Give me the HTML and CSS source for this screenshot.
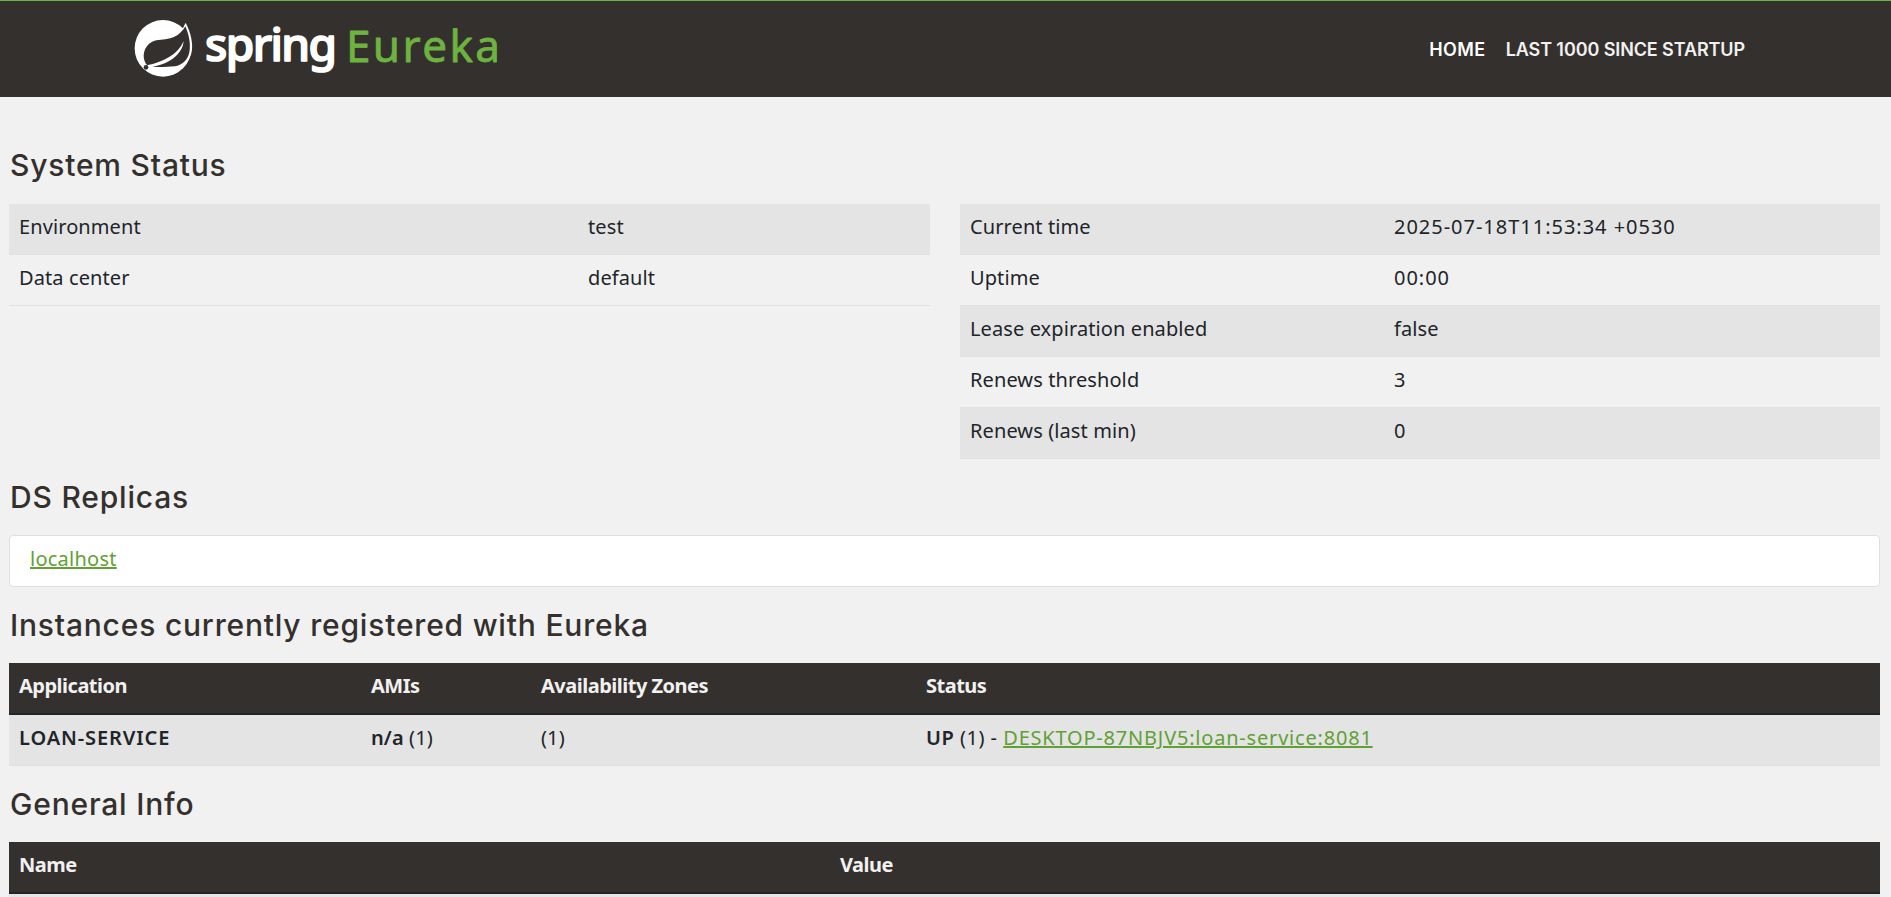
FILE: index.html
```html
<!DOCTYPE html>
<html lang="en">
<head>
<meta charset="utf-8">
<title>Eureka</title>
<link rel="stylesheet" href="styles.css">
</head>
<body>
<nav class="navbar">
  <a class="brand" href="#" aria-label="Spring Eureka">
    <svg class="logo" viewBox="0 0 370 70" width="370" height="70">
      <g transform="scale(.3333)">
        <circle cx="99" cy="103" r="85" fill="#fff"/>
        <path class="vein" d="M167 26C182 55 191 90 184 118C178 142 160 157 140 161L130 100Z"/>
        <path class="leaf" d="M166 37C177 62 183 92 178 115C173 140 155 154 135 157C110 160 80 159 58 159L48 150C34 128 42 98 64 85C88 70 138 88 166 37Z"/>
        <path class="vein" d="M161 82C157 120 120 152 56 161L50 154C100 145 143 122 161 82Z"/>
        <circle class="dot" cx="48" cy="160" r="7"/>
      </g>
      <text class="word-spring" x="75" y="47" textLength="132">spring</text>
      <text class="word-eureka" x="216" y="48" textLength="154">Eureka</text>
    </svg>
  </a>
  <div class="links"><a class="active" href="#">HOME</a><a class="last" href="#">LAST 1000 SINCE STARTUP</a></div>
</nav>
<main class="content">
  <h1 class="first">System Status</h1>
  <div class="status">
    <table class="table env">
      <tr><td>Environment</td><td>test</td></tr>
      <tr><td>Data center</td><td>default</td></tr>
    </table>
    <table class="table runtime">
      <tr><td>Current time</td><td class="num">2025-07-18T11:53:34 +0530</td></tr>
      <tr><td>Uptime</td><td class="num">00:00</td></tr>
      <tr><td>Lease expiration enabled</td><td>false</td></tr>
      <tr><td>Renews threshold</td><td>3</td></tr>
      <tr><td>Renews (last min)</td><td>0</td></tr>
    </table>
  </div>
  <h1>DS Replicas</h1>
  <ul class="replicas"><li><a href="#">localhost</a></li></ul>
  <h1>Instances currently registered with Eureka</h1>
  <table class="table instances">
    <thead><tr><th>Application</th><th>AMIs</th><th>Availability Zones</th><th>Status</th></tr></thead>
    <tbody><tr><td><b class="app">LOAN-SERVICE</b></td><td><b>n/a</b> (1)</td><td>(1)</td><td class="state"><b>UP</b> (1) - <a class="instance" href="#">DESKTOP-87NBJV5:loan-service:8081</a></td></tr></tbody>
  </table>
  <h1>General Info</h1>
  <table class="table info">
    <thead><tr><th>Name</th><th>Value</th></tr></thead>
    <tbody><tr><td></td><td></td></tr></tbody>
  </table>
</main>
</body>
</html>
```
FILE: styles.css
```css
* { box-sizing: border-box; }
body {
  margin: 0;
  background: #f1f1f1;
  color: #212529;
  font: 20px/30px "Noto Sans", sans-serif;
}
.navbar {
  display: flex;
  justify-content: space-between;
  height: 97px;
  padding: 13px 146px 0 130px;
  border-top: 1px solid #6db33f;
  background: #34302d;
}
.logo { display: block; overflow: visible; }
.leaf, .dot { fill: #34302d; }
.vein { fill: #fff; }
.word-spring {
  font: 500 46px "Noto Sans", sans-serif;
  fill: #fff;
  stroke: #fff;
  stroke-width: 1.6px;
  stroke-linejoin: round;
}
.word-eureka {
  font: 400 44px "Noto Sans", sans-serif;
  fill: #6db33f;
  stroke: #6db33f;
  stroke-width: .8px;
  stroke-linejoin: round;
}
.links {
  display: flex;
  gap: 20px;
  padding-top: 20px;
  font: 600 18px/31px Inter, sans-serif;
}
.links a { color: #f1f1f1; text-decoration: none; letter-spacing: -.1px; }
.links .active { color: #fff; letter-spacing: .4px; }
.content { padding: 50px 11px 0 9px; }
h1 {
  margin: 0 0 20px;
  padding-left: 1px;
  color: #34302d;
  font: 500 30px/36px Inter, sans-serif;
  letter-spacing: .8px;
}
h1.first { margin-bottom: 21px; }
.status {
  display: grid;
  grid-template-columns: 921px 920px;
  gap: 30px;
  align-items: start;
  margin-bottom: 20px;
}
.table {
  width: 100%;
  border-collapse: separate;
  border-spacing: 0;
  table-layout: fixed;
}
.table td {
  height: 51px;
  padding: 8px 10px 12px;
  border-bottom: 1px solid #dee2e6;
  letter-spacing: .1px;
  white-space: nowrap;
}
.table tr:nth-child(odd) td { background: #e4e4e4; }
.table th {
  height: 52px;
  padding: 8px 10px 12px;
  border-bottom: 2px solid #212529;
  background: #34302d;
  color: #f1f1f1;
  font-weight: 700;
  letter-spacing: -.5px;
  text-align: left;
}
.env td:first-child { width: 569px; }
.runtime td:first-child { width: 424px; }
.table .num { letter-spacing: .98px; }
.replicas {
  height: 52px;
  margin: 0 0 20px;
  padding: 8px 20px;
  border: 1px solid #dfdfdf;
  border-radius: 4px;
  background: #fff;
  letter-spacing: .25px;
  list-style: none;
}
a { color: #5fa134; }
.instances { margin-bottom: 20px; }
.instances th:nth-child(1) { width: 352px; }
.instances th:nth-child(2) { width: 170px; }
.instances th:nth-child(3) { width: 385px; }
.table .state { letter-spacing: .5px; }
.instance { letter-spacing: .8px; }
.app { letter-spacing: .9px; }
.info th:first-child { width: 821px; }
.table.info td { height: 3px; padding: 0; border: 0; }
b { font-weight: 600; }
```
